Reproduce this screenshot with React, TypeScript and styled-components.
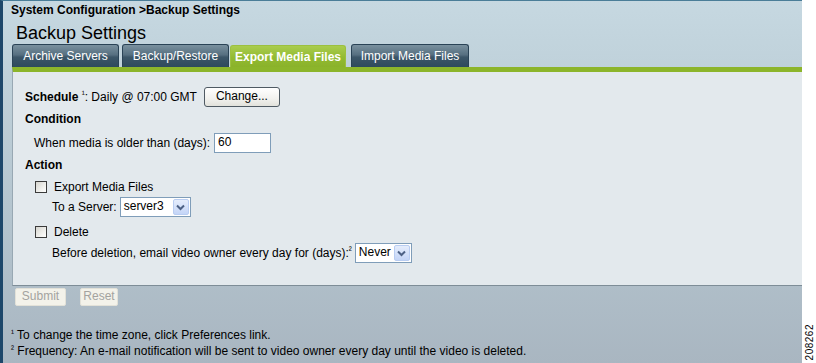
import styled, {createGlobalStyle} from 'styled-components';

const GlobalStyle = createGlobalStyle`
  body {
    margin: 0;
    font-family: "Liberation Sans", Arial, sans-serif;
    font-size: 12px;
    color: #000;
  }
`;

const Page = styled.div`
  display: flex;
  width: 816px;
  height: 363px;
  overflow: hidden;
`;

const Main = styled.div`
  flex: 1;
  display: flex;
  flex-direction: column;
  border-left: 3px solid #1d476a;
  border-top: 1px solid #4a7d98;
  background: linear-gradient(#c6d8e1 0%, #bfd1da 20%, #b4c4ce 60%, #a9b6c1 100%);
`;

const Side = styled.div`
  width: 14px;
  background: #fff;
  display: flex;
  flex-direction: column;
  justify-content: flex-end;
  align-items: center;
  padding-bottom: 3px;
`;

const FigNumber = styled.span`
  writing-mode: vertical-rl;
  transform: rotate(180deg);
  font-size: 10px;
  letter-spacing: 0.5px;
  color: #000;
`;

const Crumb = styled.div`
  font-weight: bold;
  padding: 2px 0 0 8px;
  height: 16px;
  line-height: 14px;
`;

const Title = styled.h1`
  margin: 0;
  font-size: 18px;
  font-weight: normal;
  padding-left: 13px;
  height: 25px;
  line-height: 29px;
`;

const Tabs = styled.div`
  display: flex;
  align-items: flex-end;
  margin-left: 9px;
  height: 23px;
`;

const Tab = styled.div<{active?: boolean; w: number; gap: number}>`
  width: ${p => p.w}px;
  margin-right: ${p => p.gap}px;
  height: ${p => (p.active ? 22 : 23)}px;
  box-sizing: border-box;
  border-radius: 3px 3px 0 0;
  border: 1px solid ${p => (p.active ? '#9cc03f' : '#2a4356')};
  border-bottom: none;
  background: ${p =>
    p.active
      ? 'linear-gradient(#a9cc4e, #93bb32 55%, #8ab22a)'
      : 'linear-gradient(#7a919f, #566f80 45%, #3c5668 55%, #2e4a5d)'};
  color: #fff;
  font-weight: ${p => (p.active ? 'bold' : 'normal')};
  display: flex;
  align-items: center;
  justify-content: center;
  line-height: 20px;
`;

const Panel = styled.div`
  margin-left: 9px;
  border-top: 5px solid #8cb52b;
  border-left: 1px solid #98a8b3;
  border-bottom: 1px solid #7e8d97;
  background: #e3e9ed;
  height: 219px;
  padding-top: 15px;
  box-sizing: border-box;
  display: flex;
  flex-direction: column;
`;

const Row = styled.div<{top: number; h: number; indent: number}>`
  display: flex;
  align-items: center;
  margin-top: ${p => p.top}px;
  height: ${p => p.h}px;
  padding-left: ${p => p.indent}px;
  white-space: nowrap;
`;

const Label = styled.b`
  font-weight: bold;
`;

const Sup = styled.span`
  font-size: 9px;
  position: relative;
  top: -3px;
`;

const ChangeButton = styled.button`
  margin-left: 7px;
  width: 76px;
  height: 20px;
  padding: 0 0 3px;
  font-family: inherit;
  font-size: 12px;
  color: #000;
  border: 1px solid #4f5a63;
  border-radius: 3px;
  background: linear-gradient(#ffffff, #f1f1ee 60%, #e2e2dc);
`;

const TextInput = styled.div`
  margin-left: 4px;
  width: 57px;
  height: 20px;
  box-sizing: border-box;
  border: 1px solid #7f9db9;
  background: #fff;
  padding: 0 0 0 3px;
  line-height: 17px;
`;

const Select = styled.div<{w: number}>`
  margin-left: 3px;
  width: ${p => p.w}px;
  height: 20px;
  box-sizing: border-box;
  border: 1px solid #7f9db9;
  background: #fff;
  display: flex;
  align-items: stretch;
  padding: 1px;
`;

const SelectText = styled.span`
  flex: 1;
  padding-left: 2px;
  line-height: 14px;
`;

const Chevron = styled.span`
  width: 16px;
  border-radius: 2px;
  background: linear-gradient(#e5edfc, #c4d5f7);
  border: 1px solid #b9cdf2;
  box-sizing: border-box;
  display: flex;
  align-items: center;
  justify-content: center;
`;

const Check = styled.span`
  width: 12px;
  height: 12px;
  box-sizing: border-box;
  border: 1px solid #3b3b3b;
  background: linear-gradient(135deg, #d6d5cf, #f4f4f1 70%, #fff);
  margin-right: 7px;
`;

const Actions = styled.div`
  display: flex;
  gap: 14px;
  padding: 2px 0 0 12px;
`;

const GhostButton = styled.button<{w: number}>`
  width: ${p => p.w}px;
  height: 18px;
  padding: 0 0 2px;
  font-family: inherit;
  font-size: 12px;
  color: #a3a39f;
  border: 1px solid #e2e1d8;
  border-radius: 2px;
  background: #f3f2ea;
`;

const Notes = styled.div`
  margin-top: auto;
  padding: 0 0 3px 8px;
  line-height: 15px;
`;

function ChevronIcon() {
  return (
    <svg width="9" height="7" viewBox="0 0 9 7">
      <path d="M1 1.5 L4.5 5 L8 1.5" fill="none" stroke="#4d6185" strokeWidth="2" />
    </svg>
  );
}

export default function App() {
  return (
    <Page>
      <GlobalStyle />
      <Main>
        <Crumb>System Configuration &gt;Backup Settings</Crumb>
        <Title>Backup Settings</Title>
        <Tabs>
          <Tab w={107} gap={3}>Archive Servers</Tab>
          <Tab w={107} gap={1}>Backup/Restore</Tab>
          <Tab w={116} gap={5} active>Export Media Files</Tab>
          <Tab w={118} gap={0}>Import Media Files</Tab>
        </Tabs>
        <Panel>
          <Row top={0} h={20} indent={12}>
            <Label>Schedule</Label>&nbsp;<Sup>¹</Sup>: Daily @ 07:00 GMT
            <ChangeButton>Change...</ChangeButton>
          </Row>
          <Row top={3} h={18} indent={12}>
            <Label>Condition</Label>
          </Row>
          <Row top={5} h={20} indent={21}>
            When media is older than (days):
            <TextInput>60</TextInput>
          </Row>
          <Row top={3} h={18} indent={12}>
            <Label>Action</Label>
          </Row>
          <Row top={6} h={14} indent={22}>
            <Check />Export Media Files
          </Row>
          <Row top={3} h={20} indent={39}>
            To a Server:
            <Select w={71}>
              <SelectText>server3</SelectText>
              <Chevron><ChevronIcon /></Chevron>
            </Select>
          </Row>
          <Row top={8} h={14} indent={22}>
            <Check />Delete
          </Row>
          <Row top={4} h={20} indent={39}>
            Before deletion, email video owner every day for (days):<Sup>²</Sup>
            <Select w={57}>
              <SelectText>Never</SelectText>
              <Chevron><ChevronIcon /></Chevron>
            </Select>
          </Row>
        </Panel>
        <Actions>
          <GhostButton w={51}>Submit</GhostButton>
          <GhostButton w={38}>Reset</GhostButton>
        </Actions>
        <Notes>
          <div><Sup>¹</Sup> To change the time zone, click Preferences link.</div>
          <div><Sup>²</Sup> Frequency: An e-mail notification will be sent to video owner every day until the video is deleted.</div>
        </Notes>
      </Main>
      <Side>
        <FigNumber>208262</FigNumber>
      </Side>
    </Page>
  );
}
